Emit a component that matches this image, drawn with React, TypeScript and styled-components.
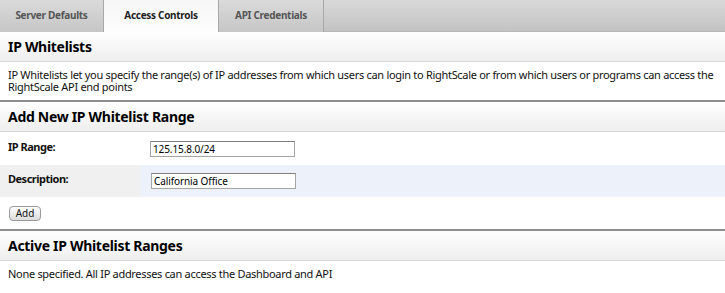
import { FC } from "react";
import styled, { createGlobalStyle } from "styled-components";

const GlobalStyle = createGlobalStyle`
    html, body {
        margin: 0;
        padding: 0;
        background: #fff;
        font-family: "Noto Sans", "DejaVu Sans", sans-serif;
        font-size: 11px;
        color: #111;
    }
`;

const tabs = [
    { name: "Server Defaults", width: 104 },
    { name: "Access Controls", width: 115 },
    { name: "API Credentials", width: 105 },
];

const App: FC = () => {
    return (
        <>
            <GlobalStyle />
            <Wrapper>
                <TabBar>
                    {tabs.map((t) => (
                        <Tab key={t.name} width={t.width} active={t.name === "Access Controls"}>
                            {t.name}
                        </Tab>
                    ))}
                </TabBar>

                <SectionHeader first>IP Whitelists</SectionHeader>
                <Text>
                    IP Whitelists let you specify the range(s) of IP addresses from which users can login to RightScale or from which users or programs can access the RightScale API end points
                </Text>

                <SectionHeader>Add New IP Whitelist Range</SectionHeader>
                <FormRow>
                    <Label>IP Range:</Label>
                    <Value>
                        <Input defaultValue="125.15.8.0/24" />
                    </Value>
                </FormRow>
                <FormRow alt>
                    <Label alt>Description:</Label>
                    <Value alt>
                        <Input defaultValue="California Office" />
                    </Value>
                </FormRow>
                <Actions>
                    <Button>Add</Button>
                </Actions>

                <SectionHeader>Active IP Whitelist Ranges</SectionHeader>
                <Text>None specified. All IP addresses can access the Dashboard and API</Text>
            </Wrapper>
        </>
    );
};

const Wrapper = styled.div`
    width: 725px;
`;

const TabBar = styled.div`
    display: flex;
    height: 32px;
    box-sizing: border-box;
    background: linear-gradient(#d9d9d9, #c3c3c3);
    border-bottom: 1px solid #b8b8b8;
`;

const Tab = styled.div<{ active?: boolean; width: number }>`
    display: flex;
    align-items: center;
    justify-content: center;
    width: ${(p) => p.width}px;
    height: 32px;
    padding-bottom: 3px;
    box-sizing: border-box;
    border-right: 1px solid #a8a8a8;
    background: ${(p) => (p.active ? "linear-gradient(#f6f6f6, #fdfdfd)" : "linear-gradient(#dadada, #c6c6c6)")};
    color: ${(p) => (p.active ? "#1e1e1e" : "#555")};
    font-weight: bold;
    font-size: 10px;
    letter-spacing: -0.3px;
`;

const SectionHeader = styled.h2<{ first?: boolean }>`
    margin: 0;
    height: ${(p) => (p.first ? "30px" : "32px")};
    box-sizing: border-box;
    display: flex;
    align-items: center;
    padding: 0 0 1px 8px;
    font-size: 14px;
    font-weight: bold;
    letter-spacing: -0.3px;
    color: #000;
    background: linear-gradient(#ffffff, #eeeeee);
    border-top: ${(p) => (p.first ? "none" : "2px solid #8c8c8c")};
    border-bottom: 1px solid #d6d6d6;
`;

const Text = styled.p`
    margin: 0;
    padding: 7px 8px 7px;
    line-height: 12px;
    font-size: 11px;
    letter-spacing: -0.3px;
`;

const FormRow = styled.div<{ alt?: boolean }>`
    display: flex;
    height: ${(p) => (p.alt ? "32px" : "33px")};
`;

const Label = styled.div<{ alt?: boolean }>`
    width: 133px;
    padding: ${(p) => (p.alt ? "6px" : "7px")} 0 0 8px;
    font-weight: bold;
    letter-spacing: -0.5px;
    background: ${(p) => (p.alt ? "#f0f0f0" : "#fff")};
`;

const Value = styled.div<{ alt?: boolean }>`
    flex: 1;
    padding: ${(p) => (p.alt ? "8px 0 0 10px" : "9px 0 0 9px")};
    background: ${(p) => (p.alt ? "#edf1f9" : "#fff")};
`;

const Input = styled.input`
    display: block;
    width: 145px;
    height: 16px;
    box-sizing: border-box;
    border: 1px solid #a5a5a5;
    border-top-color: #7e7e7e;
    padding: 0 2px;
    font-family: "Noto Sans", sans-serif;
    font-size: 10px;
    letter-spacing: -0.1px;
    color: #000;
`;

const Actions = styled.div`
    height: 32px;
    box-sizing: border-box;
    padding: 9px 9px 0;
`;

const Button = styled.button`
    display: block;
    height: 15px;
    width: 32px;
    padding: 0;
    font-family: "Noto Sans", sans-serif;
    font-size: 10px;
    line-height: 13px;
    border: 1px solid #9a9a9a;
    border-radius: 4px;
    background: linear-gradient(#fdfdfd, #dcdcdc);
    color: #111;
`;

export default App;
